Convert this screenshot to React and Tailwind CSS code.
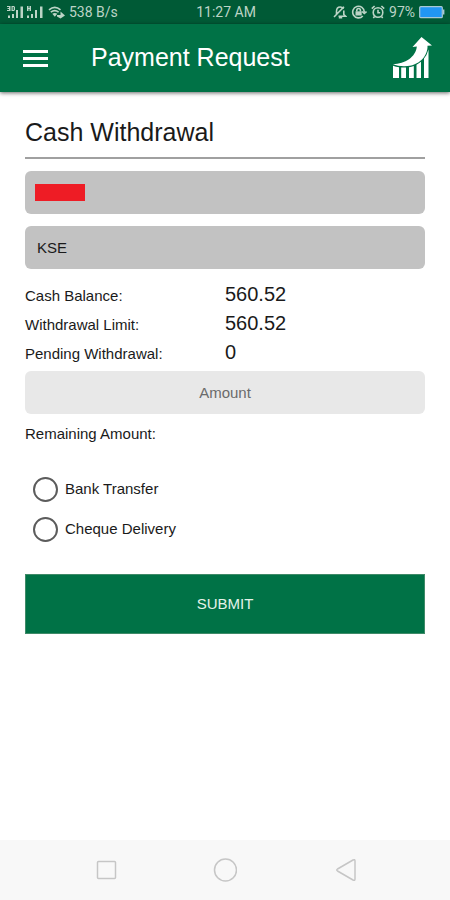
import { useState } from 'react'

const balances = [
	{ id: 'cash', label: 'Cash Balance:', value: '560.52' },
	{ id: 'limit', label: 'Withdrawal Limit:', value: '560.52' },
	{ id: 'pending', label: 'Pending Withdrawal:', value: '0' },
]

const methods = [
	{ id: 'bank', label: 'Bank Transfer' },
	{ id: 'cheque', label: 'Cheque Delivery' },
]

const SignalIcon = () => (
	<svg viewBox="0 0 37 14" className="h-[14px] w-[37px]" fill="#bcd4c6">
		<path d="M0 1h3.500v5H0V5h2V4H.5V3H2V2H0zM4.500 1h2.500l1 1v3l-1 1H4.500zM5.700 2v3h1V2zM20 1h1.500v2h1V1H24v5h-1.500V4h-1v2H20z" fillRule="evenodd" />
		<path d="M1 10.500h2V13H1zM5 9h2v4H5zM9 5h2v8H9zM13.500 1.500H16V13h-2.500z" />
		<path d="M20 10.500h2V13h-2zM24 9h2v4h-2zM28 5h2v8h-2zM33 1.500h2.500V13H33z" />
	</svg>
)

const WifiIcon = () => (
	<svg viewBox="0 0 17 14" className="h-[14px] w-[17px]" fill="none">
		<path d="M1 4.800c3.600-3 8-3 11.500 0M2.800 7.200c2.500-2 5.300-2 7.800 0" stroke="#bcd4c6" strokeWidth="1.700" />
		<path d="M4.300 8.800c1.600-1.200 3.500-1.200 5 0L6.800 11.800z" fill="#bcd4c6" />
		<path d="M9 10h3.500V6.500L17 10.500l-4.500 3-3.500-2z" fill="#bcd4c6" />
	</svg>
)

const MuteIcon = () => (
	<svg viewBox="0 0 14 14" className="h-[14px] w-[14px]" fill="none" stroke="#bcd4c6" strokeWidth="1.600">
		<path d="M3.500 9.500V6.500C3.500 3.800 5 2 7.200 2c1.500 0 2.600.8 3.200 2M10.800 5.500V9.500l1.700 1.700H5.500M5.800 12.800h3.400M11 1.800L1 12" />
	</svg>
)

const LockRotationIcon = () => (
	<svg viewBox="0 0 16 14" className="h-[14px] w-[16px]" fill="none" stroke="#bcd4c6" strokeWidth="1.600">
		<path d="M11.800 11A5.800 5.800 0 1 1 13.300 7M11 6.500l2.300 2 2.200-2" />
		<path d="M5.800 6.500V5.300a1.800 1.800 0 0 1 3.600 0v1.200" />
		<path d="M4.500 6.300h6.200v4.200H4.500z" fill="#bcd4c6" stroke="none" />
	</svg>
)

const AlarmIcon = () => (
	<svg viewBox="0 0 14 14" className="h-[14px] w-[14px]" fill="none" stroke="#bcd4c6" strokeWidth="1.600">
		<circle cx="7" cy="7.500" r="4.800" />
		<path d="M7 4.800v3h2.200M.8 3.600L3.600 1M13.200 3.600L10.400 1M3.500 11.500L2.300 13M10.500 11.500l1.200 1.500" />
	</svg>
)

const BatteryIcon = () => (
	<svg viewBox="0 0 26 14" className="h-[14px] w-[26px]">
		<rect x=".7" y="1.700" width="22.600" height="11" rx="1" fill="#2196f3" stroke="#a9c8d4" strokeWidth="1.200" />
		<path d="M24 4.500h1.400v5H24z" fill="#a9c8d4" />
	</svg>
)

const StatusBar = () => (
	<div className="flex h-6 items-center justify-between bg-[#005a36] pr-[5px] pl-[7px] font-['Roboto',sans-serif] text-[14px] text-[#bcd4c6]">
		<div className="flex flex-1 items-center gap-1">
			<SignalIcon />
			<WifiIcon />
			<span>538 B/s</span>
		</div>
		<span>11:27 AM</span>
		<div className="flex flex-1 items-center justify-end gap-1">
			<MuteIcon />
			<LockRotationIcon />
			<AlarmIcon />
			<span>97%</span>
			<BatteryIcon />
		</div>
	</div>
)

const GrowthLogo = () => (
	<svg viewBox="0 0 40 42" className="h-[42px] w-10" fill="#ffffff" role="img" aria-label="Growth chart">
		<path d="M29.500 0L40 8.500l-4.500.3C36 18 28 29.500 12 29.300 8 29.300 4 28.500 1 27.300 13 27 24 20 24.800 9.600L20.500 10z" />
		<path d="M1 28.800q3 1 6 1.500V41H1zM9.200 30.500h4.800V41H9.200zM17 30.300q2.500-.3 4.800-1.200V41H17zM24.500 27.800q2.500-1.300 4.500-3V41h-4.500zM32 21.500q3-3.500 4.500-9V41H32z" />
	</svg>
)

const Header = () => (
	<header className="flex h-[68px] items-center bg-[#007246] pr-[18px] pl-[23px] shadow-[0_1px_4px_rgba(0,0,0,0.6)]">
		<button type="button" aria-label="Open menu" className="flex w-[25px] flex-col gap-1">
			<span className="h-[3px] w-full bg-white" />
			<span className="h-[3px] w-full bg-white" />
			<span className="h-[3px] w-full bg-white" />
		</button>
		<h1 className="ml-[43px] flex-1 text-[25px] text-white">Payment Request</h1>
		<GrowthLogo />
	</header>
)

const NavBar = () => (
	<nav className="flex h-[60px] items-center justify-between bg-[#f8f8f8] px-[94px]">
		<button type="button" aria-label="Recent apps">
			<svg viewBox="0 0 24 24" className="h-6 w-6" fill="none" stroke="#c6c6c6" strokeWidth="1.500">
				<rect x="3.500" y="3.500" width="18" height="17" rx="1" />
			</svg>
		</button>
		<button type="button" aria-label="Home">
			<svg viewBox="0 0 24 24" className="h-6 w-6" fill="none" stroke="#c6c6c6" strokeWidth="1.500">
				<circle cx="12.500" cy="12" r="11" />
			</svg>
		</button>
		<button type="button" aria-label="Back">
			<svg viewBox="0 0 24 24" className="h-6 w-6" fill="none" stroke="#c6c6c6" strokeWidth="1.500" strokeLinejoin="round">
				<path d="M23 3v18q0 2-2 1L5.500 13q-1.500-1 0-2L21 2q2-1 2 1z" />
			</svg>
		</button>
	</nav>
)

const App = () => {
	const [amount, setAmount] = useState('')
	const [method, setMethod] = useState('')

	return (
		<div className="flex min-h-screen flex-col bg-white font-['Liberation_Sans',Arial,sans-serif] text-[#1a1a1a]">
			<StatusBar />
			<Header />
			<main className="flex-1 px-[25px] pt-6">
				<form onSubmit={(e) => e.preventDefault()}>
					<h2 className="border-b-2 border-[#a0a0a0] pb-2 text-[25px] leading-[33px]">
						Cash Withdrawal
					</h2>
					<div className="mt-3 flex h-[43px] items-center rounded-md bg-[#c2c2c2] px-[10px]">
						<span className="h-[17px] w-[50px] bg-[#ee1c25]" />
					</div>
					<input
						readOnly
						value="KSE"
						aria-label="Exchange"
						className="mt-3 h-[43px] w-full rounded-md bg-[#c2c2c2] px-3 text-[15px] outline-none"
					/>
					<dl className="mt-3">
						{balances.map((row) => (
							<div key={row.id} className="grid h-[29px] grid-cols-2 items-baseline">
								<dt className="text-[15px] leading-5">{row.label}</dt>
								<dd className="text-[20px] leading-[27px]">{row.value}</dd>
							</div>
						))}
					</dl>
					<input
						value={amount}
						onChange={({ target }) => setAmount(target.value)}
						placeholder="Amount"
						aria-label="Amount"
						inputMode="decimal"
						className="mt-[3px] h-[43px] w-full rounded-md bg-[#e8e8e8] text-center text-[15px] outline-none placeholder:text-[#6b6b6b]"
					/>
					<p className="mt-[10px] text-[15px] leading-5">Remaining Amount:</p>
					<div className="mt-[25px] flex flex-col pl-2">
						{methods.map(({ id, label }) => (
							<label key={id} className="flex h-10 items-center gap-[7px] text-[15px]">
								<input
									type="radio"
									name="method"
									value={id}
									checked={method === id}
									onChange={() => setMethod(id)}
									className="h-[25px] w-[25px] appearance-none rounded-full border-2 border-[#5c5c5c] checked:border-8 checked:border-[#007246]"
								/>
								{label}
							</label>
						))}
					</div>
					<button
						type="submit"
						className="mt-[25px] h-[60px] w-full border border-[#3f8a68] bg-[#007246] text-[15px] text-[#e6f3ea]"
					>
						SUBMIT
					</button>
				</form>
			</main>
			<NavBar />
		</div>
	)
}

export default App
